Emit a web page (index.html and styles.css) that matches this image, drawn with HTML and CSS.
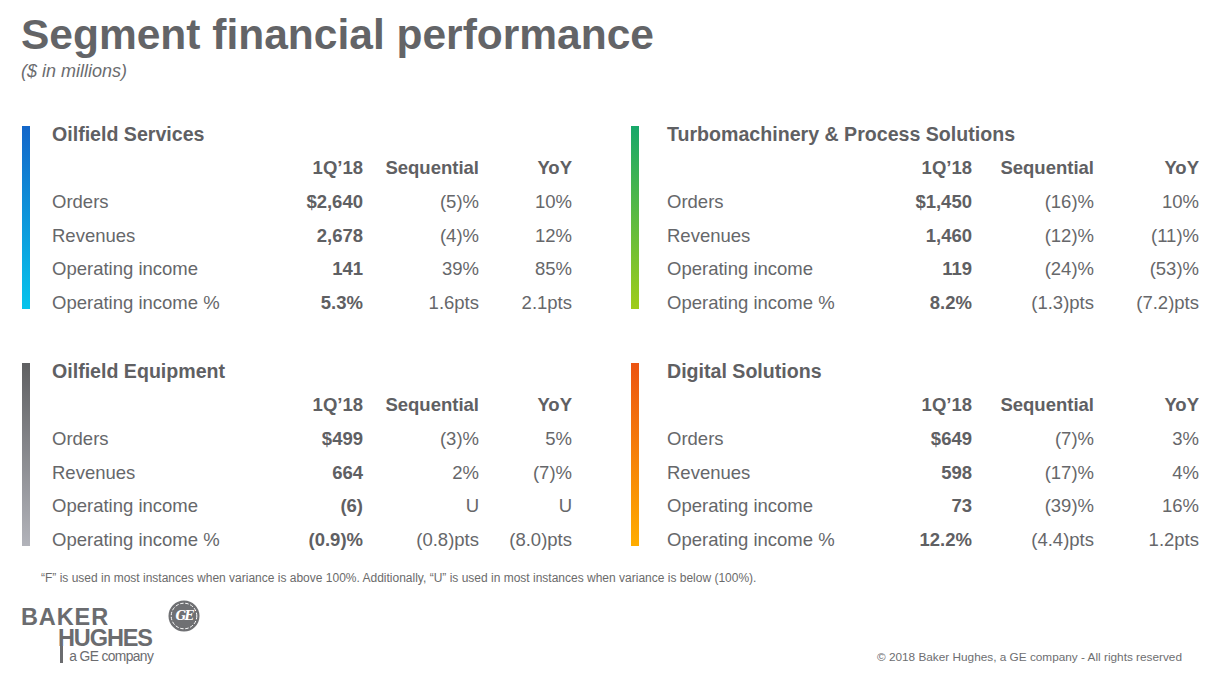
FILE: index.html
```html
<!DOCTYPE html>
<html lang="en">
<head>
<meta charset="utf-8">
<title>Segment financial performance</title>
<link rel="stylesheet" href="styles.css">
</head>
<body>
<div class="slide">
  <header class="slide-head">
    <h1 class="title">Segment financial performance</h1>
    <p class="subtitle">($ in millions)</p>
  </header>

  <main class="segments">
    <section class="seg seg--left">
      <div class="bar bar--blue"></div>
      <div class="seg-body">
        <h2 class="seg-title">Oilfield Services</h2>
        <div class="grid">
          <span></span><span class="hd">1Q’18</span><span class="hd">Sequential</span><span class="hd">YoY</span>
          <span class="lbl">Orders</span><span class="num">$2,640</span><span class="val">(5)%</span><span class="val">10%</span>
          <span class="lbl">Revenues</span><span class="num">2,678</span><span class="val">(4)%</span><span class="val">12%</span>
          <span class="lbl">Operating income</span><span class="num">141</span><span class="val">39%</span><span class="val">85%</span>
          <span class="lbl">Operating income %</span><span class="num">5.3%</span><span class="val">1.6pts</span><span class="val">2.1pts</span>
        </div>
      </div>
    </section>

    <section class="seg seg--right">
      <div class="bar bar--green"></div>
      <div class="seg-body">
        <h2 class="seg-title">Turbomachinery &amp; Process Solutions</h2>
        <div class="grid">
          <span></span><span class="hd">1Q’18</span><span class="hd">Sequential</span><span class="hd">YoY</span>
          <span class="lbl">Orders</span><span class="num">$1,450</span><span class="val">(16)%</span><span class="val">10%</span>
          <span class="lbl">Revenues</span><span class="num">1,460</span><span class="val">(12)%</span><span class="val">(11)%</span>
          <span class="lbl">Operating income</span><span class="num">119</span><span class="val">(24)%</span><span class="val">(53)%</span>
          <span class="lbl">Operating income %</span><span class="num">8.2%</span><span class="val">(1.3)pts</span><span class="val">(7.2)pts</span>
        </div>
      </div>
    </section>

    <section class="seg seg--left">
      <div class="bar bar--gray"></div>
      <div class="seg-body">
        <h2 class="seg-title">Oilfield Equipment</h2>
        <div class="grid">
          <span></span><span class="hd">1Q’18</span><span class="hd">Sequential</span><span class="hd">YoY</span>
          <span class="lbl">Orders</span><span class="num">$499</span><span class="val">(3)%</span><span class="val">5%</span>
          <span class="lbl">Revenues</span><span class="num">664</span><span class="val">2%</span><span class="val">(7)%</span>
          <span class="lbl">Operating income</span><span class="num">(6)</span><span class="val">U</span><span class="val">U</span>
          <span class="lbl">Operating income %</span><span class="num">(0.9)%</span><span class="val">(0.8)pts</span><span class="val">(8.0)pts</span>
        </div>
      </div>
    </section>

    <section class="seg seg--right">
      <div class="bar bar--orange"></div>
      <div class="seg-body">
        <h2 class="seg-title">Digital Solutions</h2>
        <div class="grid">
          <span></span><span class="hd">1Q’18</span><span class="hd">Sequential</span><span class="hd">YoY</span>
          <span class="lbl">Orders</span><span class="num">$649</span><span class="val">(7)%</span><span class="val">3%</span>
          <span class="lbl">Revenues</span><span class="num">598</span><span class="val">(17)%</span><span class="val">4%</span>
          <span class="lbl">Operating income</span><span class="num">73</span><span class="val">(39)%</span><span class="val">16%</span>
          <span class="lbl">Operating income %</span><span class="num">12.2%</span><span class="val">(4.4)pts</span><span class="val">1.2pts</span>
        </div>
      </div>
    </section>
  </main>

  <p class="footnote">“F” is used in most instances when variance is above 100%. Additionally, “U” is used in most instances when variance is below (100%).</p>

  <footer class="slide-foot">
    <div class="logos">
      <div class="bh-logo">
        <div class="bh-baker">BAKER</div>
        <div class="bh-hughes">HUGHES</div>
        <div class="bh-ge">a GE company</div>
      </div>
      <svg class="ge-mark" viewBox="0 0 32 32" width="32" height="32" aria-label="GE">
        <circle cx="16" cy="16" r="15.5" fill="#6f7073"/>
        <circle cx="16" cy="16" r="12.8" fill="none" stroke="#ffffff" stroke-width="1" stroke-dasharray="3.4 1.7"/>
        <circle cx="16" cy="16" r="11.8" fill="#6f7073"/>
        <text x="16" y="20.3" text-anchor="middle" font-family="DejaVu Serif, serif" font-style="italic" font-weight="700" font-size="12.5" fill="#ffffff" letter-spacing="-1.6">GE</text>
      </svg>
    </div>
    <p class="copyright">© 2018 Baker Hughes, a GE company - All rights reserved</p>
  </footer>
</div>
</body>
</html>
```

FILE: styles.css
```css
html, body {
  margin: 0;
  padding: 0;
  background: #ffffff;
}

body {
  font-family: "Liberation Sans", Arial, sans-serif;
  color: #5d5e61;
}

.slide {
  width: 1217px;
  height: 676px;
  box-sizing: border-box;
  padding: 11px 0 0 0;
  display: flex;
  flex-direction: column;
  overflow: hidden;
}

.slide-head {
  padding-left: 21px;
}

.title {
  margin: 0;
  font-size: 42.5px;
  line-height: 48px;
  font-weight: 700;
  color: #636467;
}

.subtitle {
  margin: 1px 0 0 0;
  font-size: 18px;
  line-height: 22px;
  font-style: italic;
  color: #6b6c6f;
}

.segments {
  margin-top: 36px;
  display: grid;
  grid-template-columns: 609px 608px;
  row-gap: 35.5px;
}

.seg {
  display: flex;
  align-items: stretch;
  padding-left: 22px;
}

.bar {
  width: 8px;
  flex: none;
  margin: 8px 0 10.5px 0;
}

.bar--blue   { background: linear-gradient(to bottom, #1466c9, #06c4ec); }
.bar--green  { background: linear-gradient(to bottom, #17a86a, #9fcc1a); }
.bar--gray   { background: linear-gradient(to bottom, #5f6062, #b2b3ba); }
.bar--orange { background: linear-gradient(to bottom, #ec5412, #ffad00); }

.seg-body {
  flex: 1;
}

.seg--left .seg-body  { padding-left: 22px; }
.seg--right .seg-body { padding-left: 28px; }

.seg-title {
  margin: 0;
  font-size: 19.6px;
  line-height: 33.6px;
  font-weight: 700;
  color: #5f6063;
}

.grid {
  display: grid;
  grid-auto-rows: 33.6px;
  align-items: center;
  font-size: 18.5px;
}

.seg--left .grid  { grid-template-columns: 231px 80px 116px 93px; }
.seg--right .grid { grid-template-columns: 225px 80px 122px 105px; }

.hd {
  font-weight: 700;
  text-align: right;
  color: #5f6063;
}

.lbl {
  color: #66676a;
}

.num {
  font-weight: 700;
  text-align: right;
  color: #5f6063;
}

.val {
  text-align: right;
  color: #66676a;
}

.footnote {
  margin: 14px 0 0 41px;
  font-size: 12px;
  line-height: 14px;
  color: #6b6b6b;
}

.slide-foot {
  display: flex;
  justify-content: space-between;
  align-items: flex-end;
  padding: 0 35px 0 22px;
  margin-top: 22px;
}

.logos {
  display: flex;
  align-items: flex-start;
  gap: 15px;
}

.bh-logo {
  display: flex;
  flex-direction: column;
  color: #6b6c6f;
  font-weight: 700;
}

.bh-baker {
  font-size: 23.5px;
  line-height: 21px;
  letter-spacing: 0.9px;
  margin-left: -1px;
}

.bh-hughes {
  font-size: 23.5px;
  line-height: 21px;
  letter-spacing: -1.1px;
  margin-left: 36px;
}

.bh-ge {
  display: flex;
  align-items: flex-end;
  margin-left: 37.6px;
  font-size: 13.8px;
  line-height: 15px;
  font-weight: 400;
  letter-spacing: -0.6px;
}

.bh-ge::before {
  content: "";
  width: 3.6px;
  margin: -3px 6px 1px 0;
  background: #6b6c6f;
  align-self: stretch;
}

.ge-mark {
  margin-top: -7px;
  display: block;
}

.copyright {
  margin: 0;
  font-size: 11.8px;
  line-height: 14px;
  color: #6d6e71;
}
```
